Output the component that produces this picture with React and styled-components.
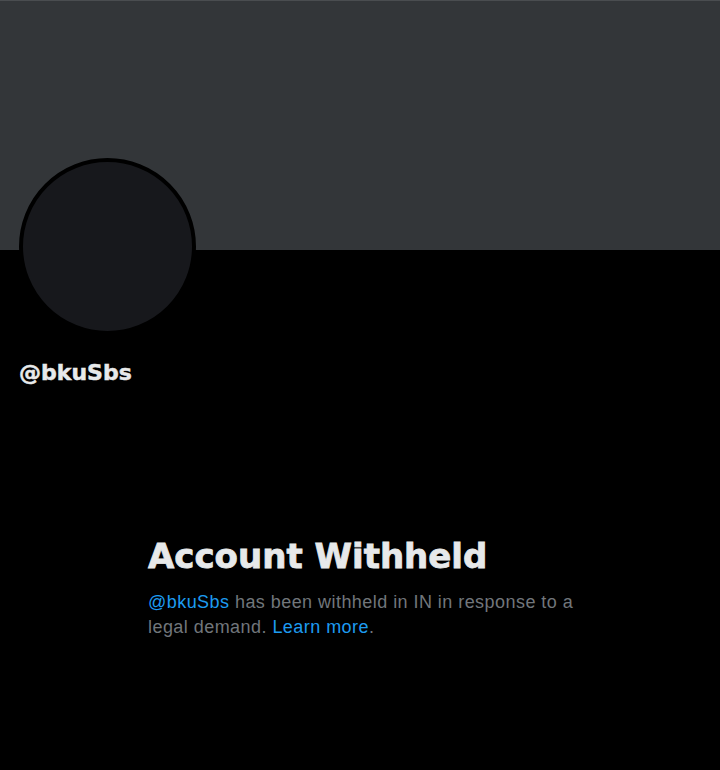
import React from "react";
import styled, { createGlobalStyle } from "styled-components";

const Global = createGlobalStyle`
  html, body { margin: 0; padding: 0; background: #000; }
  body { width: 720px; height: 770px; overflow: hidden; }
`;

const Page = styled.div`
  width: 720px;
  height: 770px;
  background: #000;
  display: flex;
  flex-direction: column;
`;

const Banner = styled.div`
  height: 249px;
  background: #333639;
  border-top: 1px solid #4a4d50;
  flex-shrink: 0;
`;

const ProfileHead = styled.div`
  padding-left: 19px;
  display: flex;
  flex-direction: column;
  align-items: flex-start;
`;

const Avatar = styled.div`
  width: 169px;
  height: 169px;
  margin-top: -92px;
  border-radius: 50%;
  border: 4px solid #000;
  background: #17181c;
`;

const Handle = styled.div`
  margin-top: 24px;
  font-family: "DejaVu Sans", sans-serif;
  font-weight: 700;
  font-size: 22px;
  line-height: 28px;
  color: #e7e9ea;
  -webkit-text-stroke: 0.5px #e7e9ea;
`;

const Notice = styled.div`
  margin-top: 149px;
  padding-left: 148px;
  width: 440px;
  display: flex;
  flex-direction: column;
  gap: 14px;
`;

const Title = styled.h1`
  margin: 0;
  font-family: "DejaVu Sans", sans-serif;
  font-weight: 700;
  font-size: 34px;
  line-height: 40px;
  color: #e7e9ea;
  -webkit-text-stroke: 0.8px #e7e9ea;
`;

const Message = styled.p`
  margin: 0;
  font-family: "Liberation Sans", Arial, sans-serif;
  font-size: 18px;
  line-height: 25px;
  letter-spacing: 0.45px;
  color: #71767b;
`;

const Link = styled.span`
  color: #1d9bf0;
`;

export default function App() {
  return (
    <Page>
      <Global />
      <Banner />
      <ProfileHead>
        <Avatar />
        <Handle>@bkuSbs</Handle>
      </ProfileHead>
      <Notice>
        <Title>Account Withheld</Title>
        <Message>
          <Link>@bkuSbs</Link> has been withheld in IN in response to a legal
          demand. <Link>Learn more</Link>.
        </Message>
      </Notice>
    </Page>
  );
}
